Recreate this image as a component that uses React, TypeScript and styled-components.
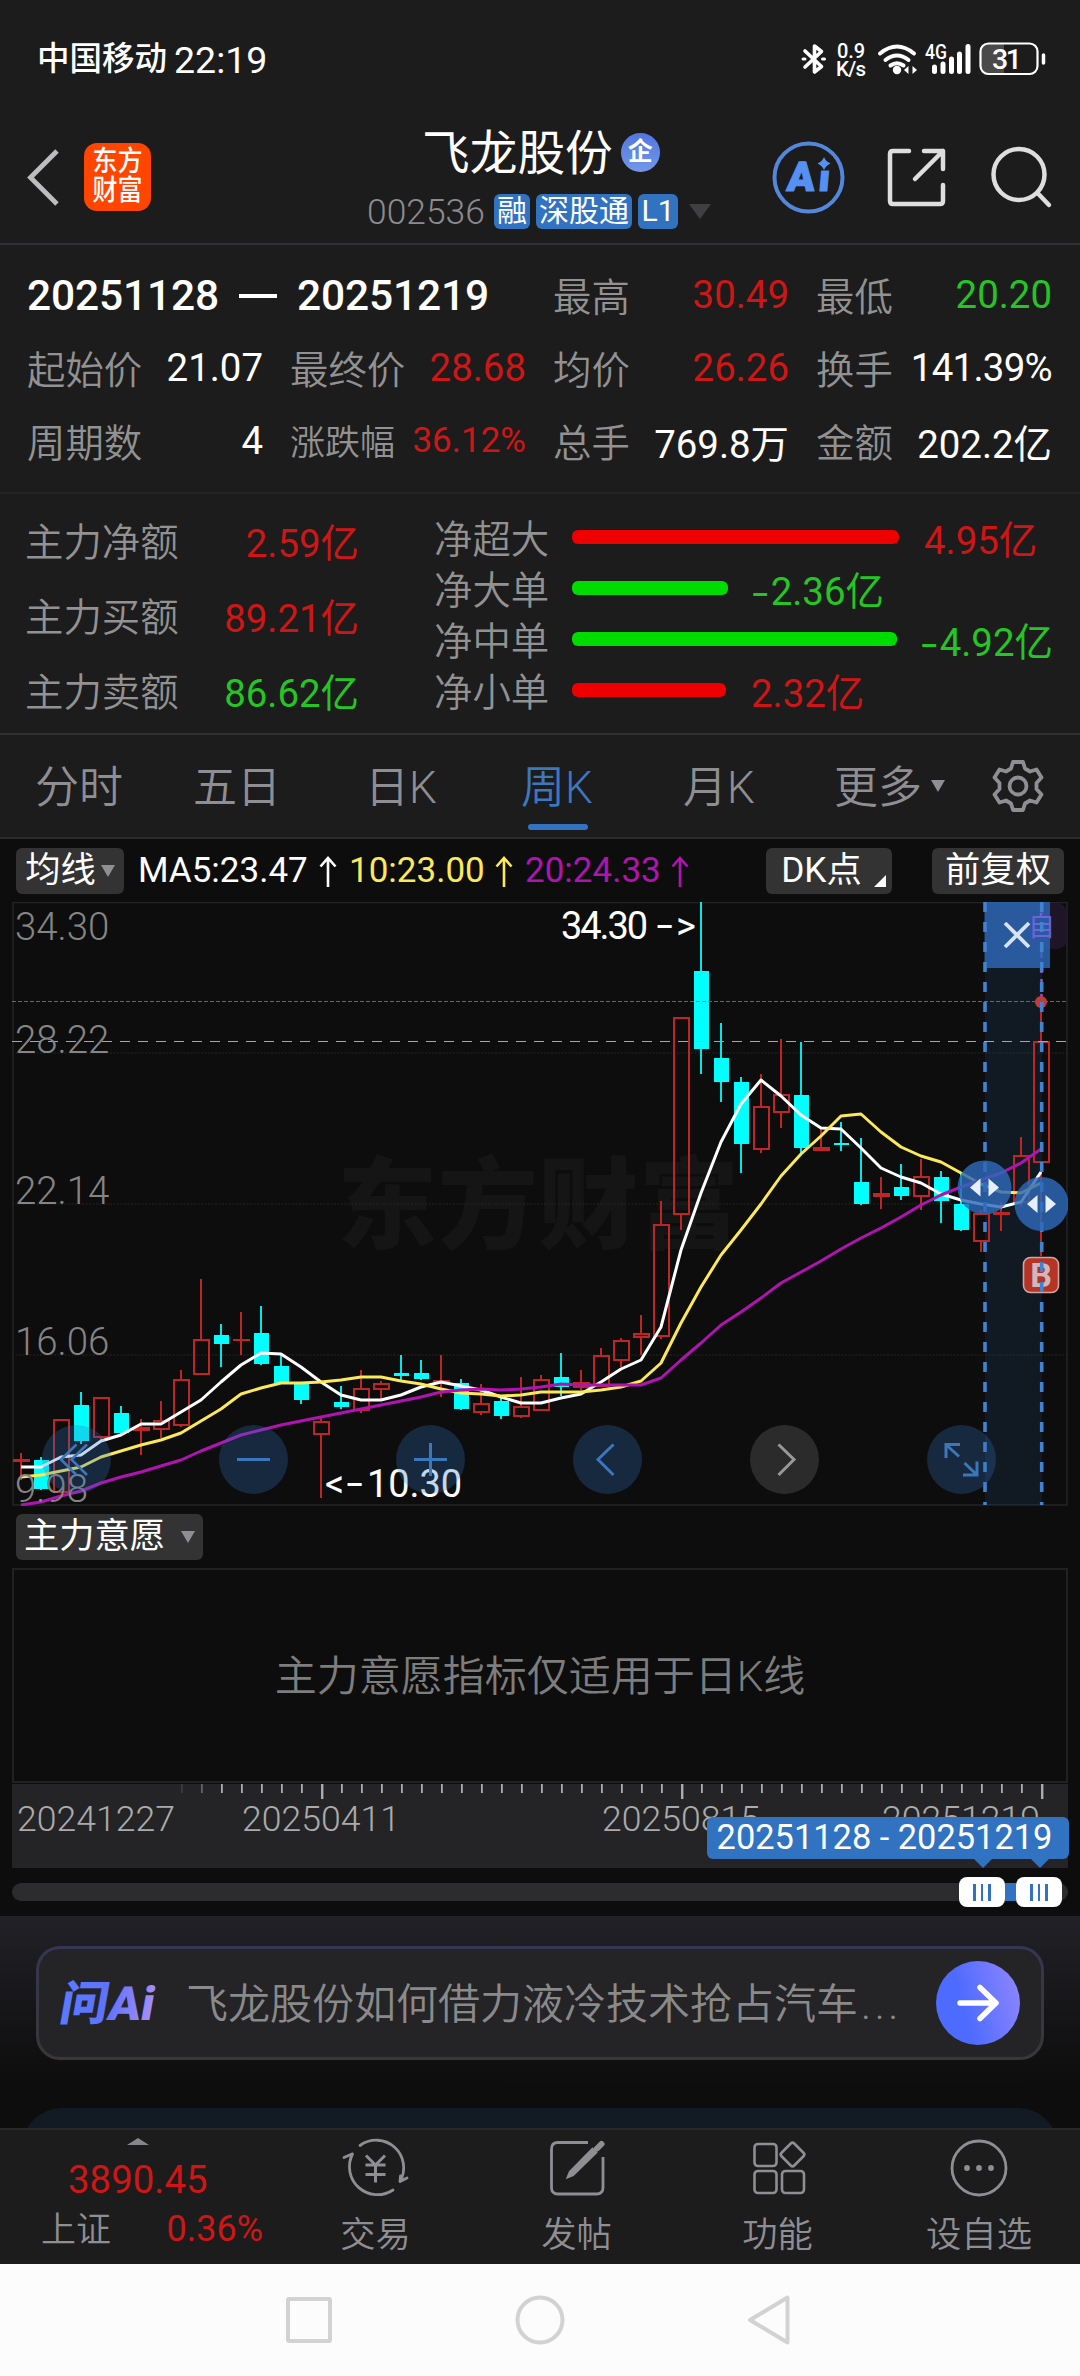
import React from "react";
import styled, { createGlobalStyle } from "styled-components";

const RED = "#cf1616";
const GREEN = "#25c525";
const BLUE = "#3173c0";
const FONT = 'Roboto, "Noto Sans CJK SC", sans-serif';

const Global = createGlobalStyle`
  * { box-sizing: border-box; }
  body { margin: 0; background: #0d0d0d; font-family: ${FONT}; color: #fff; }
`;

const Screen = styled.div`
  width: 1080px;
  height: 2376px;
  display: flex;
  flex-direction: column;
  overflow: hidden;
  background: #0d0d0d;
  white-space: nowrap;
  font-weight: 400;
`;

/* ---------- status bar ---------- */
const StatusBar = styled.div`
  height: 118px;
  flex: none;
  display: flex;
  justify-content: space-between;
  padding: 0 32px 0 37px;
  background: #1c1c1c;
`;
const Carrier = styled.div`
  display: flex;
  align-items: center;
  gap: 7px;
  font-size: 32.5px;
  font-weight: 500;
  line-height: 118px;
`;
const Clock = styled.span`
  padding-top: 2px;
  font-size: 37.5px;
  font-weight: 400;
`;
const StatusIcons = styled.svg`
  width: 260px;
  height: 118px;
`;

/* ---------- header ---------- */
const Header = styled.header`
  height: 127px;
  flex: none;
  display: grid;
  grid-template-columns: 151px 1fr 310px;
  background: #1c1c1c;
  border-bottom: 2px solid #313133;
`;
const HeaderLeft = styled.div`
  display: flex;
  padding: 25px 0 0 26px;
  gap: 24px;
`;
const BackIcon = styled.svg`
  width: 34px;
  height: 68px;
`;
const Brand = styled.div`
  flex: none;
  width: 67px;
  height: 68px;
  border-radius: 13px;
  background: #ff4600;
  display: flex;
  flex-direction: column;
  align-items: center;
  justify-content: center;
  font-size: 25px;
  font-weight: 500;
  line-height: 29px;
  span { transform: translateY(-1px) scaleY(1.12); }
`;
const HeaderCenter = styled.div`
  padding: 5px 0 0 216px;
`;
const TitleRow = styled.div`
  display: flex;
  align-items: center;
  padding-left: 55px;
  height: 56px;
  gap: 8px;
  font-size: 47.7px;
`;
const TitleText = styled.span`
  transform: translateY(-2px);
`;
const CompanyBadge = styled.span`
  width: 39px;
  height: 39px;
  margin-top: 3px;
  border-radius: 50%;
  background: linear-gradient(#5276e0, #7398e8);
  font-size: 25px;
  font-weight: 700;
  line-height: 37px;
  text-align: center;
`;
const CodeRow = styled.div`
  display: flex;
  align-items: center;
  height: 64px;
  gap: 6px;
`;
const Code = styled.span`
  width: 120px;
  margin-right: 1px;
  color: #8b8b90;
  font-size: 35.4px;
  font-weight: 300;
  padding-top: 1px;
`;
const Tag = styled.span<{ $w: number }>`
  width: ${(p) => p.$w}px;
  height: 35px;
  border-radius: 6px;
  background: ${BLUE};
  font-size: 30px;
  line-height: 33px;
  text-align: center;
`;
const Caret = styled.i<{ $w: number; $h: number; $c: string; $ml?: number }>`
  display: inline-block;
  width: 0;
  height: 0;
  margin-left: ${(p) => p.$ml ?? 0}px;
  border: ${(p) => p.$w / 2}px solid transparent;
  border-bottom-width: 0;
  border-top: ${(p) => p.$h}px solid ${(p) => p.$c};
`;
const HeaderIcons = styled.svg`
  width: 310px;
  height: 125px;
`;

/* ---------- range statistics ---------- */
const Stats = styled.section`
  height: 249px;
  flex: none;
  display: grid;
  grid-template-columns: repeat(4, 236px);
  grid-auto-rows: 73px;
  column-gap: 27px;
  padding: 13px 0 0 27px;
  background: #1c1c1c;
  border-bottom: 2px solid #252525;
`;
const Range = styled.div`
  grid-column: span 2;
  display: flex;
  align-items: center;
  gap: 20px;
  padding-top: 2px;
  font-size: 42.5px;
  font-weight: 500;
  span { width: 192px; letter-spacing: -0.15px; }
`;
const Dash = styled.i`
  width: 38px;
  height: 4px;
  background: #fff;
`;
const Stat = styled.div<{ $small?: boolean }>`
  display: flex;
  align-items: center;
  justify-content: space-between;
  font-size: ${(p) => (p.$small ? 35 : 38.4)}px;
`;
const Label = styled.span`
  color: #929292;
  font-weight: 350;
  transform: translateY(-1.5px);
`;
const Value = styled.span<{ $c?: string; $ls?: number }>`
  color: ${(p) => p.$c ?? "#fff"};
  letter-spacing: ${(p) => p.$ls ?? 0}px;
`;
const Minus = styled.span`
  display: inline-block;
  margin: 0 5px 0 2px;
  transform: scaleX(1.5) translateY(1px);
`;

/* ---------- money flow ---------- */
const Flow = styled.section`
  height: 241px;
  flex: none;
  display: flex;
  padding-left: 25px;
  gap: 75px;
  background: #1c1c1c;
  border-bottom: 2px solid #303032;
  font-size: 38.4px;
`;
const FlowTotals = styled.div`
  width: 334px;
  padding-top: 8px;
`;
const FlowTotal = styled.div`
  height: 75px;
  display: flex;
  align-items: center;
  justify-content: space-between;
`;
const FlowBars = styled.div`
  flex: 1;
  padding-top: 17px;
`;
const FlowBarRow = styled.div`
  height: 51px;
  display: flex;
  align-items: center;
`;
const FlowLabel = styled(Label)`
  width: 138px;
`;
const Bar = styled.i<{ $c: string }>`
  height: 14px;
  margin-right: 25px;
  border-radius: 6px;
  background: ${(p) => p.$c};
`;

/* ---------- period tabs ---------- */
const Tabs = styled.nav`
  height: 104px;
  flex: none;
  display: grid;
  grid-template-columns: 158px 158px 170px 142px 182px 159px 98px;
  padding-left: 0;
  background: #1c1c1c;
  border-bottom: 2px solid #2c2c2e;
`;
const Tab = styled.div<{ $on?: boolean }>`
  display: flex;
  align-items: center;
  justify-content: center;
  position: relative;
  color: ${(p) => (p.$on ? "#3b78be" : "#8e8e93")};
  font-size: 44px;
  font-weight: 350;
`;
const TabText = styled.span`
  transform: translateY(-2px);
`;
const Underline = styled.i`
  position: absolute;
  left: 42px;
  bottom: 7px;
  width: 60px;
  height: 6px;
  border-radius: 3px;
  background: ${BLUE};
`;

/* ---------- moving average bar ---------- */
const MaBar = styled.div`
  height: 63px;
  flex: none;
  display: flex;
  align-items: center;
  padding: 0 16px;
  font-size: 35px;
`;
const Pill = styled.div<{ $w: number; $ml?: number }>`
  width: ${(p) => p.$w}px;
  height: 46px;
  flex: none;
  margin-left: ${(p) => p.$ml ?? 0}px;
  display: flex;
  align-items: center;
  justify-content: center;
  position: relative;
  border-radius: 6px;
  background: #333;
  font-size: 35.3px;
  line-height: 44px;
`;
const PillText = styled.span<{ $mr?: number }>`
  margin-right: ${(p) => p.$mr ?? 0}px;
  transform: translateY(-1px);
`;
const Corner = styled.i`
  position: absolute;
  right: 6px;
  bottom: 7px;
  border-left: 12px solid transparent;
  border-bottom: 12px solid #fff;
`;
const MaValues = styled.div`
  flex: 1;
  display: flex;
  gap: 12px;
  padding-left: 14px;
`;
const Ma = styled.span<{ $c: string; $w: number }>`
  width: ${(p) => p.$w}px;
  display: flex;
  align-items: center;
  justify-content: space-between;
  color: ${(p) => p.$c};
`;

/* ---------- chart ---------- */
const ChartBox = styled.div`
  position: relative;
  height: 604px;
  flex: none;
  margin: 0 12px;
`;
const Plot = styled.svg`
  display: block;
  width: 1056px;
  height: 604px;
`;
const Controls = styled.div`
  position: absolute;
  left: 30px;
  top: 523px;
  display: flex;
  gap: 108px;
`;
const Control = styled.div<{ $off?: boolean }>`
  width: 69px;
  height: 69px;
  border-radius: 50%;
  background: ${(p) => (p.$off ? "#2b2b2b" : "rgba(49,115,192,0.28)")};
  svg { display: block; width: 69px; height: 69px; }
`;

/* ---------- indicator ---------- */
const IndicatorBar = styled.div`
  height: 62px;
  flex: none;
  padding: 8px 0 0 16px;
`;
const IndicatorPanel = styled.div`
  height: 215px;
  flex: none;
  margin: 0 12px;
  padding-bottom: 6px;
  border: 2px solid #212121;
  display: flex;
  align-items: center;
  justify-content: center;
  color: #7d7d7d;
  font-size: 42px;
  font-weight: 350;
`;

/* ---------- time axis ---------- */
const Axis = styled.div`
  position: relative;
  height: 84px;
  flex: none;
  margin: 1px 12px 0;
  background: #242426;
`;
const Ticks = styled.svg`
  display: block;
  width: 1056px;
  height: 16px;
`;
const Dates = styled.div`
  display: flex;
  padding: 0 26px 0 5px;
  height: 38px;
  align-items: center;
  color: #ababab;
  font-size: 35.6px;
  font-weight: 300;
`;
const DateLabel = styled.span<{ $w: number }>`
  width: ${(p) => p.$w}px;
`;
const Tip = styled.div`
  position: absolute;
  right: -1px;
  top: 33px;
  width: 362px;
  height: 42px;
  border-radius: 6px;
  background: ${BLUE};
  font-size: 34.4px;
  line-height: 41px;
  text-align: center;
  padding-right: 7px;
`;
const TipArrow = styled.i<{ $x: number }>`
  position: absolute;
  left: ${(p) => p.$x}px;
  top: 42px;
  border: 9px solid transparent;
  border-top-color: ${BLUE};
  border-bottom: 0;
`;
const Slider = styled.div`
  height: 48px;
  flex: none;
  display: flex;
  align-items: center;
  padding: 0 12px 0;
`;
const Track = styled.div`
  flex: 1;
  height: 18px;
  display: flex;
  align-items: center;
  justify-content: flex-end;
  padding-right: 6px;
  border-radius: 9px;
  background: #2c2c2e;
`;
const Picked = styled.i`
  width: 11px;
  height: 18px;
  background: ${BLUE};
`;
const Thumb = styled.i`
  width: 46px;
  height: 30px;
  display: flex;
  align-items: center;
  justify-content: center;
  gap: 5px;
  border-radius: 8px;
  background: #fff;
`;
const Grip = styled.b`
  width: 2.5px;
  height: 17px;
  background: ${BLUE};
`;

/* ---------- ask AI ---------- */
const Ask = styled.section`
  height: 212px;
  flex: none;
  padding: 30px 36px 0;
  overflow: hidden;
  background: linear-gradient(#212127, #0d0d0d 80%);
`;
const AskBox = styled.div`
  height: 114px;
  display: flex;
  align-items: center;
  border: 3px solid transparent;
  border-radius: 24px;
  padding-left: 18px;
  background:
    linear-gradient(#242427, #242427) padding-box,
    linear-gradient(#343654, #3a3736) border-box;
`;
const AskLogo = styled.svg`
  width: 106px;
  height: 60px;
  flex: none;
`;
const Question = styled.div`
  width: 757px;
  padding: 0 0 5px 23px;
  color: #8a8a8a;
  font-size: 42px;
  font-weight: 350;
`;
const Ellipsis = styled.span`
  letter-spacing: 3.6px;
  margin-left: 3px;
`;
const Go = styled.div`
  width: 84px;
  height: 84px;
  flex: none;
  margin-left: 16px;
  border-radius: 50%;
  background: linear-gradient(75deg, #4e6bff 35%, #9288ff);
  svg { display: block; width: 84px; height: 84px; }
`;
const NextCard = styled.div`
  height: 80px;
  margin: 48px -14px 0;
  border-radius: 48px;
  background: #121a23;
`;

/* ---------- bottom bar ---------- */
const BottomBar = styled.footer`
  height: 136px;
  flex: none;
  display: grid;
  grid-template-columns: 275px 201px 201px 201px 202px;
  background: #1c1c1c;
  border-top: 2px solid #28282a;
`;
const IndexCell = styled.div`
  display: flex;
  flex-direction: column;
  color: ${RED};
`;
const UpCaret = styled.i`
  width: 0;
  margin: 8px 0 0 127px;
  border: 11px solid transparent;
  border-top: 0;
  border-bottom: 7px solid #87878b;
`;
const IndexValue = styled.div`
  margin: 13px 0 0 68px;
  font-size: 38.4px;
  line-height: 44px;
`;
const IndexRow = styled.div`
  display: flex;
  justify-content: space-between;
  align-items: center;
  margin: 5px 12px 0 41px;
  height: 44px;
  font-size: 36px;
`;
const Muted = styled.span`
  color: #8e8e93;
  font-size: 35px;
  font-weight: 350;
  transform: translateY(-3px);
`;
const Action = styled.div`
  display: flex;
  flex-direction: column;
  align-items: center;
  padding-top: 2px;
  color: #8e8e93;
  font-size: 35.3px;
  font-weight: 350;
  line-height: 50px;
  svg { width: 72px; height: 72px; flex: none; margin-bottom: 6px; }
`;
const SystemNav = styled.div`
  height: 112px;
  flex: none;
  background: #fcfcfc;
  svg { display: block; width: 1080px; height: 112px; }
`;

/* Candles: [direction, high, bodyTop, bodyBottom, low] on the plot's vertical scale. */
type Candle = [number, number, number, number, number];
const candles: Candle[] = [
  [1, 1453, 1459, 1462, 1480], [0, 1457, 1460, 1489, 1490], [1, 1419, 1419, 1493, 1493], [0, 1392, 1405, 1441, 1444],
  [1, 1397, 1397, 1438, 1440], [0, 1406, 1413, 1433, 1434], [1, 1419, 1427, 1431, 1455], [1, 1401, 1420, 1430, 1438],
  [1, 1370, 1379, 1426, 1427], [1, 1279, 1339, 1375, 1375], [0, 1324, 1335, 1344, 1367], [1, 1312, 1339, 1341, 1355],
  [0, 1306, 1333, 1364, 1365], [0, 1355, 1366, 1383, 1383], [0, 1383, 1383, 1400, 1404], [1, 1417, 1421, 1435, 1498],
  [0, 1386, 1402, 1407, 1409], [1, 1370, 1388, 1411, 1413], [1, 1381, 1383, 1390, 1400], [0, 1355, 1373, 1376, 1382],
  [0, 1360, 1373, 1379, 1380], [1, 1355, 1380, 1382, 1397], [0, 1379, 1383, 1409, 1410], [1, 1384, 1403, 1413, 1415],
  [0, 1398, 1401, 1416, 1419], [1, 1377, 1406, 1417, 1418], [1, 1375, 1379, 1411, 1411], [0, 1353, 1377, 1387, 1396],
  [1, 1370, 1382, 1388, 1390], [1, 1348, 1355, 1387, 1387], [1, 1338, 1340, 1361, 1367], [1, 1315, 1333, 1338, 1355],
  [1, 1201, 1224, 1337, 1339], [1, 1017, 1017, 1215, 1230], [0, 902, 971, 1049, 1074], [0, 1023, 1058, 1082, 1102],
  [0, 1077, 1082, 1144, 1173], [1, 1074, 1106, 1150, 1153], [1, 1039, 1094, 1113, 1128], [0, 1042, 1095, 1148, 1155],
  [1, 1128, 1147, 1151, 1151], [0, 1122, 1143, 1145, 1151], [0, 1138, 1182, 1204, 1205], [1, 1177, 1193, 1197, 1209],
  [0, 1164, 1187, 1196, 1200], [1, 1159, 1176, 1197, 1210], [0, 1171, 1177, 1201, 1223], [0, 1172, 1204, 1230, 1231],
  [1, 1210, 1213, 1242, 1252], [1, 1202, 1212, 1215, 1231], [1, 1137, 1155, 1203, 1207], [1, 1002, 1041, 1163, 1256],
];
const ma5 = [1467, 1467, 1457, 1455, 1441, 1435, 1424, 1424, 1412, 1400, 1382, 1365, 1353, 1354, 1367, 1382, 1395, 1400, 1400, 1395, 1387, 1382, 1386, 1390, 1397, 1403, 1403, 1398, 1394, 1382, 1369, 1360, 1327, 1250, 1193, 1142, 1104, 1080, 1096, 1115, 1128, 1129, 1148, 1168, 1177, 1183, 1194, 1200, 1204, 1207, 1202, 1172];
const ma10 = [1477, 1475, 1471, 1467, 1457, 1451, 1445, 1440, 1433, 1421, 1409, 1394, 1388, 1383, 1383, 1382, 1380, 1377, 1377, 1381, 1384, 1389, 1393, 1394, 1396, 1395, 1392, 1392, 1392, 1390, 1387, 1381, 1363, 1323, 1287, 1255, 1230, 1204, 1176, 1154, 1136, 1116, 1114, 1132, 1147, 1156, 1162, 1173, 1184, 1192, 1193, 1183];
const ma20 = [1505, 1502, 1496, 1491, 1483, 1477, 1472, 1466, 1460, 1451, 1443, 1435, 1430, 1425, 1421, 1417, 1413, 1409, 1405, 1401, 1397, 1392, 1390, 1389, 1390, 1389, 1387, 1384, 1385, 1385, 1385, 1385, 1378, 1360, 1343, 1325, 1312, 1298, 1283, 1272, 1261, 1249, 1238, 1228, 1217, 1205, 1195, 1187, 1180, 1173, 1163, 1149];
const line = (ys: number[]) => ys.map((y, i) => `${21 + 20 * i},${y}`).join(" ");

const CandleMark = ({ data, x }: { data: Candle; x: number }) => {
  const [up, hi, top, bottom, lo] = data;
  if (!up) {
    return (
      <g fill="#00ffff">
        <rect x={x - 1} y={hi} width={2} height={lo - hi} opacity={0.9} />
        <rect x={x - 7} y={top} width={15} height={bottom - top} />
      </g>
    );
  }
  const h = bottom - top;
  return (
    <g fill="#bd2624">
      <rect x={x - 1} y={hi} width={2} height={Math.max(top - hi, 0)} />
      <rect x={x - 1} y={bottom} width={2} height={Math.max(lo - bottom, 0)} />
      {h < 5 ? (
        <rect x={x - 8} y={top} width={17} height={h} />
      ) : (
        <rect x={x - 7} y={top + 1} width={15} height={h - 2} fill="none" stroke="#bd2624" strokeWidth={2} />
      )}
    </g>
  );
};

const Handle = ({ x, y }: { x: number; y: number }) => (
  <g>
    <circle cx={x} cy={y} r={27} fill="#2d69b8" fillOpacity={0.82} />
    <path d={`M${x - 14.5} ${y}l10.500-9v18zM${x + 14.5} ${y}l-10.500-9v18z`} fill="#e6effb" />
  </g>
);

const Arrow = () => (
  <svg width="18" height="32" viewBox="0 0 18 32" fill="none" stroke="currentColor" strokeWidth="2.6">
    <path d="M9 32V3M1.500 11.500L9 3l7.500 8.500" />
  </svg>
);

const stats: { label: string; value: string; color?: string; small?: boolean; ls?: number }[] = [
  { label: "最高", value: "30.49", color: RED },
  { label: "最低", value: "20.20", color: GREEN },
  { label: "起始价", value: "21.07" },
  { label: "最终价", value: "28.68", color: RED },
  { label: "均价", value: "26.26", color: RED },
  { label: "换手", value: "141.39%", ls: -0.7 },
  { label: "周期数", value: "4" },
  { label: "涨跌幅", value: "36.12%", color: RED, small: true },
  { label: "总手", value: "769.8万" },
  { label: "金额", value: "202.2亿" },
];
const totals = [
  { label: "主力净额", value: "2.59亿", color: RED },
  { label: "主力买额", value: "89.21亿", color: RED },
  { label: "主力卖额", value: "86.62亿", color: GREEN },
];
const bars = [
  { label: "净超大", sign: "", value: "4.95亿", width: 327, color: RED, bar: "#ee0000" },
  { label: "净大单", sign: "-", value: "2.36亿", width: 156, color: GREEN, bar: "#00dc00" },
  { label: "净中单", sign: "-", value: "4.92亿", width: 325, color: GREEN, bar: "#00dc00" },
  { label: "净小单", sign: "", value: "2.32亿", width: 154, color: RED, bar: "#ee0000" },
];

export default function App() {
  return (
    <Screen>
      <Global />
      <StatusBar>
        <Carrier>
          中国移动<Clock>22:19</Clock>
        </Carrier>
        <StatusIcons viewBox="788 0 260 118" fill="none" stroke="#fff" strokeLinecap="round" strokeLinejoin="round">
          <path d="M805 51L821.500 66.500 814.500 72V46L821.500 51.500 805 67" strokeWidth="3.600" />
          <path d="M803 59h2M822.500 59h2" strokeWidth="3" />
          <g fill="#fff" stroke="none" fontFamily={FONT} fontWeight="500">
            <text x="837" y="57.500" fontSize="20" textLength="28">0.9</text>
            <text x="836" y="76" fontSize="20.500" textLength="30">K/s</text>
            <text x="925" y="58.500" fontSize="20" textLength="22" lengthAdjust="spacingAndGlyphs">4G</text>
          </g>
          <path d="M880 53.500q17-14 34 0M885.500 60q11.500-9 23 0M890.500 65.500q6.500-4.500 13 0" strokeWidth="4" />
          <circle cx="897" cy="70" r="4.200" fill="#fff" stroke="none" />
          <path d="M904 70l4.500-4v8zM917 70l-4.500-4v8z" fill="#fff" stroke="none" />
          <path d="M934.500 67v4.500M943 64v7.500M951.500 59v12.500M959.500 54v17.500M968 46.500v25" strokeWidth="5" />
          <path d="M989 44h-6q-7 0-7 7v16q0 7 7 7h16V44z" fill="#4a4a4a" stroke="none" transform="translate(5 0)" />
          <rect x="980.500" y="43.500" width="57" height="30.500" rx="8" strokeWidth="2.200" />
          <path d="M1043.500 55v8" strokeWidth="3.500" />
          <text x="992" y="68.500" fill="#fff" stroke="none" fontFamily={FONT} fontWeight="500" fontSize="28.500" textLength="30">31</text>
        </StatusIcons>
      </StatusBar>

      <Header>
        <HeaderLeft>
          <BackIcon viewBox="0 0 34 68" fill="none" stroke="#bdbdbf" strokeWidth="4.800">
            <path d="M31 8L4.500 34.500 31 61" />
          </BackIcon>
          <Brand>
            <span>东方</span>
            <span>财富</span>
          </Brand>
        </HeaderLeft>
        <HeaderCenter>
          <TitleRow>
            <TitleText>飞龙股份</TitleText>
            <CompanyBadge>企</CompanyBadge>
          </TitleRow>
          <CodeRow>
            <Code>002536</Code>
            <Tag $w={36}>融</Tag>
            <Tag $w={96}>深股通</Tag>
            <Tag $w={40}>L1</Tag>
            <Caret $w={22} $h={15} $c="#404042" $ml={5} />
          </CodeRow>
        </HeaderCenter>
        <HeaderIcons viewBox="770 118 310 125" fill="none" stroke="#dedede" strokeWidth="4.500" strokeLinecap="round" strokeLinejoin="round">
          <circle cx="808.500" cy="177.500" r="34" stroke="#5387dc" strokeWidth="4" />
          <g fill="#5590f2" stroke="#5590f2" strokeWidth="1.200" fontFamily={FONT} fontWeight="900">
            <text x="0" y="0" fontSize="41" transform="translate(786 190.500) skewX(-5)" textLength="43">Ai</text>
          </g>
          <rect x="815" y="156" width="18" height="14.500" fill="#1c1c1c" stroke="none" />
          <path d="M824 157q1.800 4.500 6.500 6.500q-4.700 2-6.500 6.500q-1.800-4.500-6.500-6.500q4.700-2 6.500-6.500z" fill="#5590f2" stroke="none" />
          <path d="M909 151h-16q-3 0-3 3v47q0 3 3 3h47q3 0 3-3v-16M924 151h19v18M943 151L915 179" />
          <circle cx="1019" cy="174.500" r="25.500" />
          <path d="M1037.500 193l11.500 12" />
        </HeaderIcons>
      </Header>

      <Stats>
        <Range>
          <span>20251128</span>
          <Dash />
          <span>20251219</span>
        </Range>
        {stats.map((s) => (
          <Stat key={s.label} $small={s.small}>
            <Label>{s.label}</Label>
            <Value $c={s.color} $ls={s.ls}>{s.value}</Value>
          </Stat>
        ))}
      </Stats>

      <Flow>
        <FlowTotals>
          {totals.map((t) => (
            <FlowTotal key={t.label}>
              <Label>{t.label}</Label>
              <Value $c={t.color}>{t.value}</Value>
            </FlowTotal>
          ))}
        </FlowTotals>
        <FlowBars>
          {bars.map((b) => (
            <FlowBarRow key={b.label}>
              <FlowLabel>{b.label}</FlowLabel>
              <Bar $c={b.bar} style={{ width: b.width }} />
              <Value $c={b.color}>
                {b.sign && <Minus>{b.sign}</Minus>}
                {b.value}
              </Value>
            </FlowBarRow>
          ))}
        </FlowBars>
      </Flow>

      <Tabs>
        <Tab><TabText>分时</TabText></Tab>
        <Tab><TabText>五日</TabText></Tab>
        <Tab><TabText>日K</TabText></Tab>
        <Tab $on>
          <TabText>周K</TabText>
          <Underline />
        </Tab>
        <Tab><TabText>月K</TabText></Tab>
        <Tab>
          <TabText>更多</TabText>
          <Caret $w={15} $h={12} $c="#8e8e93" $ml={9} />
        </Tab>
        <Tab>
          <svg width="54" height="54" viewBox="-27 -27 54 54" fill="none" stroke="#8e8e93" strokeWidth="3.800" strokeLinejoin="round">
            <path d="M-5-24H5L7-17.500 12-14.500 18.500-16.500 23.500-8.500 18.500-3V3L23.500 8.500 18.500 16.500 12 14.500 7 17.500 5 24H-5L-7 17.500-12 14.500-18.500 16.500-23.500 8.500-18.500 3V-3L-23.500-8.500-18.500-16.500-12-14.500-7-17.500z" />
            <circle r="8.500" />
          </svg>
        </Tab>
      </Tabs>

      <MaBar>
        <Pill $w={108}>
          <PillText>均线</PillText>
          <Caret $w={14} $h={12} $c="#8e8e93" $ml={5} />
        </Pill>
        <MaValues>
          <Ma $c="#fff" $w={199}>MA5:23.47<Arrow /></Ma>
          <Ma $c="#fbe95a" $w={164}>10:23.00<Arrow /></Ma>
          <Ma $c="#b014b0" $w={164}>20:24.33<Arrow /></Ma>
        </MaValues>
        <Pill $w={126}>
          <PillText $mr={15}>DK点</PillText>
          <Corner />
        </Pill>
        <Pill $w={132} $ml={40}><PillText>前复权</PillText></Pill>
      </MaBar>

      <ChartBox>
        <Plot viewBox="12 902 1056 604" fontFamily={FONT}>
          <text x="337" y="1241" fontSize="100" fontWeight="900" fill="#151515" textLength="402">东方财富</text>
          <g stroke="#262626" strokeDasharray="2 1.500">
            <path d="M12 1053h1056M12 1204h1056M12 1355h1056" />
          </g>
          <rect x="13" y="902.500" width="1054" height="602.500" fill="none" stroke="#242424" strokeWidth="1.600" />
          <rect x="985" y="902" width="57" height="603" fill={BLUE} fillOpacity="0.12" />
          <rect x="1013" y="903" width="54" height="46" rx="10" fill="#1f1529" />
          {candles.map((c, i) => (
            <CandleMark key={i} data={c} x={21 + 20 * i} />
          ))}
          <path d="M12 1001.500H1067" stroke="#41729f" strokeDasharray="4 2" />
          <path d="M12 1041.500H1067" stroke="#c6a175" strokeDasharray="10 8" />
          <g fill="none" strokeWidth="3" strokeLinejoin="round">
            <polyline points={line(ma5)} stroke="#fff" />
            <polyline points={line(ma10)} stroke="#fbe95a" />
            <polyline points={line(ma20)} stroke="#b014b0" />
          </g>
          <path d="M1041.500 949v51" stroke="#9a55d6" strokeWidth="2.400" strokeDasharray="9 6" />
          <circle cx="1041" cy="1002" r="6" fill="#c23b3c" />
          <g fontSize="38" fill="#fff">
            <text x="561" y="938.500" textLength="87">34.30</text>
            <text x="0" y="0" transform="translate(656.500 937.500) scale(1.55 1)">-</text>
            <text x="676" y="938.500" textLength="22">&gt;</text>
            <text x="325" y="1496.500" textLength="22">&lt;</text>
            <text x="0" y="0" transform="translate(346.500 1495.500) scale(1.55 1)">-</text>
            <text x="367" y="1496.500" textLength="95">10.30</text>
          </g>
          <g fontSize="38.400" fill="#858585" fontWeight="300">
            <text x="15" y="939.500">34.30</text>
            <text x="15" y="1052.500">28.22</text>
            <text x="15" y="1203.500">22.14</text>
            <text x="15" y="1354.500">16.06</text>
            <text x="15" y="1501.500">9.98</text>
          </g>
          <rect x="1023.500" y="1257.500" width="35" height="35" rx="7" fill="#b63325" stroke="#cba7a4" strokeWidth="1.600" />
          <text x="1041" y="1287" fontSize="34" fontWeight="700" fill="#cdb9bc" textAnchor="middle">B</text>
          <rect x="984.500" y="902" width="65.500" height="66" fill="#2d69b8" fillOpacity="0.82" />
          <text x="1028" y="936" fontSize="27" fill="#6f62dc">自</text>
          <path d="M985 902V1505M1041.700 902V1505" stroke="#4083d2" strokeWidth="3.600" strokeDasharray="10 10" />
          <path d="M1005 923l24 24M1029 923l-24 24" stroke="#d7e2f3" strokeWidth="3.800" />
          <Handle x={984.5} y={1187.500} />
          <Handle x={1041.5} y={1204} />
        </Plot>
        <Controls>
          <Control>
            <svg viewBox="0 0 69 69" fill="none" stroke="#3b77bd" strokeWidth="2.600"><path d="M34.500 19.500L19 34.500l15.500 15.500M45 19.500L29.500 34.500 45 50" /></svg>
          </Control>
          <Control>
            <svg viewBox="0 0 69 69" fill="none" stroke="#3b77bd" strokeWidth="3"><path d="M18 34.500h33" /></svg>
          </Control>
          <Control>
            <svg viewBox="0 0 69 69" fill="none" stroke="#3b77bd" strokeWidth="3"><path d="M18 34.500h33M34.500 18v33" /></svg>
          </Control>
          <Control>
            <svg viewBox="0 0 69 69" fill="none" stroke="#3b77bd" strokeWidth="3"><path d="M40.500 19.500L25 34.500l15.500 15.500" /></svg>
          </Control>
          <Control $off>
            <svg viewBox="0 0 69 69" fill="none" stroke="#98989a" strokeWidth="3"><path d="M28.500 19.500L44 34.500 28.500 50" /></svg>
          </Control>
          <Control>
            <svg viewBox="0 0 69 69" fill="none" stroke="#3b77bd" strokeWidth="3"><path d="M19 33V19.500h14M20 20.500l12 11M50 36.500V50H36M49 49L37.500 38" /></svg>
          </Control>
        </Controls>
      </ChartBox>

      <IndicatorBar>
        <Pill $w={187}>
          <PillText>主力意愿</PillText>
          <Caret $w={14} $h={12} $c="#8e8e93" $ml={16} />
        </Pill>
      </IndicatorBar>
      <IndicatorPanel>主力意愿指标仅适用于日K线</IndicatorPanel>

      <Axis>
        <Ticks viewBox="12 0 1056 16">
          {Array.from({ length: 44 }, (_, i) => {
            const x = 181 + i * 20;
            const major = (x - 321) % 360 === 0;
            const fade = i === 0 ? 0.15 : i === 1 ? 0.4 : 0.85;
            return <rect key={x} x={x} y={0} width={major ? 2.4 : 1.8} height={major ? 15 : 9} fill="#c4c4c4" opacity={fade} />;
          })}
        </Ticks>
        <Dates>
          <DateLabel $w={225}>20241227</DateLabel>
          <DateLabel $w={360}>20250411</DateLabel>
          <DateLabel $w={280}>20250815</DateLabel>
          <DateLabel $w={160}>20251219</DateLabel>
        </Dates>
        <Tip>
          20251128 - 20251219
          <TipArrow $x={267} />
          <TipArrow $x={324} />
        </Tip>
      </Axis>
      <Slider>
        <Track>
          <Thumb><Grip /><Grip /><Grip /></Thumb>
          <Picked />
          <Thumb><Grip /><Grip /><Grip /></Thumb>
        </Track>
      </Slider>

      <Ask>
        <AskBox>
          <AskLogo viewBox="57 1973 106 60">
            <defs>
              <linearGradient id="ask" x1="0" x2="1">
                <stop offset="0" stopColor="#5a7bff" />
                <stop offset="0.5" stopColor="#5f72fa" />
                <stop offset="1" stopColor="#a78ff8" />
              </linearGradient>
            </defs>
            <text x="0" y="0" transform="translate(58 2019.500) skewX(-10)" fontFamily={FONT} fontSize="47" fontWeight="900" fill="url(#ask)" textLength="94" lengthAdjust="spacingAndGlyphs">问Ai</text>
          </AskLogo>
          <Question>
            飞龙股份如何借力液冷技术抢占汽车<Ellipsis>...</Ellipsis>
          </Question>
          <Go>
            <svg viewBox="0 0 84 84" fill="none" stroke="#fff" strokeWidth="5.500" strokeLinecap="round" strokeLinejoin="round">
              <path d="M24 42h36M44 26.500L60 42 44 57.500" />
            </svg>
          </Go>
        </AskBox>
        <NextCard />
      </Ask>

      <BottomBar>
        <IndexCell>
          <UpCaret />
          <IndexValue>3890.45</IndexValue>
          <IndexRow>
            <Muted>上证</Muted>
            0.36%
          </IndexRow>
        </IndexCell>
        <Action>
          <svg viewBox="340 2132 72 72" fill="none" stroke="#8e8e93" strokeWidth="2.800" strokeLinecap="round" strokeLinejoin="round">
            <path d="M360 2145.500A27.500 27.500 0 0 1 400 2181.500L407 2178M400 2181.500L400.500 2176M352.500 2154A28 28 0 0 0 393 2190M344 2157.500l8-3.500-1.500 6" />
            <path d="M366 2155.500l9.500 9.500 9.500-9.500M365.500 2165h20M365.500 2174.500h20M375.500 2165v17.500" strokeWidth="3" strokeLinecap="butt" />
          </svg>
          交易
        </Action>
        <Action>
          <svg viewBox="541 2132 72 72" fill="none" stroke="#8e8e93" strokeWidth="2.800">
            <path d="M588 2142.500h-30q-6.500 0-6.500 6.500v38.500q0 6.500 6.500 6.500h38.500q6.500 0 6.500-6.500V2157" />
            <path d="M592.500 2149l3.500 3.500-23 22.500-5 2 2-5z" fill="#8e8e93" stroke="#8e8e93" strokeWidth="2.500" />
            <path d="M597 2148.500l4.500-4.500" strokeWidth="6" strokeLinecap="round" />
          </svg>
          发帖
        </Action>
        <Action>
          <svg viewBox="741 2132 72 72" fill="none" stroke="#8e8e93" strokeWidth="2.600">
            <rect x="753.500" y="2144" width="22" height="22" rx="3.500" />
            <rect x="753.500" y="2171" width="22" height="22" rx="3.500" />
            <rect x="781" y="2171" width="22" height="22" rx="3.500" />
            <rect x="-9" y="-9" width="18" height="18" rx="2.500" transform="translate(791.500 2154.500) rotate(45)" />
          </svg>
          功能
        </Action>
        <Action>
          <svg viewBox="943 2132 72 72" fill="none" stroke="#8e8e93" strokeWidth="2.800">
            <circle cx="979" cy="2168" r="27" />
            <g fill="#8e8e93" stroke="none">
              <circle cx="967" cy="2168" r="2.900" />
              <circle cx="979" cy="2168" r="2.900" />
              <circle cx="991" cy="2168" r="2.900" />
            </g>
          </svg>
          设自选
        </Action>
      </BottomBar>

      <SystemNav>
        <svg viewBox="0 0 1080 112" fill="none" stroke="#d2d2d2" strokeWidth="4" strokeLinejoin="round">
          <rect x="288" y="35" width="42" height="42" rx="1" />
          <circle cx="540" cy="56" r="22.500" />
          <path d="M787.500 33.500v45L750 56z" />
        </svg>
      </SystemNav>
    </Screen>
  );
}
